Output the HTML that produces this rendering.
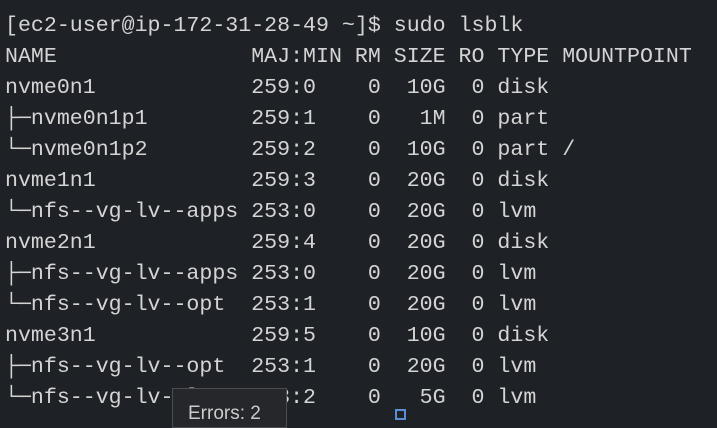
<!DOCTYPE html>
<html><head><style>
html,body{margin:0;padding:0;width:717px;height:415px;overflow:hidden;background:#1e2126;}
pre{margin:0;position:absolute;left:5px;top:11px;font-family:"Liberation Mono","DejaVu Sans Mono",monospace;font-size:21.6px;line-height:31px;color:#d4d4d4;letter-spacing:0;}
.tip{position:absolute;left:172px;top:388px;width:115px;height:40px;background:#25272b;border:1px solid #4a4d52;box-sizing:border-box;}
.tip span{position:absolute;left:15px;top:14px;font-family:"Liberation Sans",sans-serif;font-size:19px;color:#cccccc;}
.sq{position:absolute;left:395px;top:409px;width:11px;height:11px;border:2px solid #5a8fd6;box-sizing:border-box;}
</style></head><body>
<pre>[ec2-user@ip-172-31-28-49 ~]$ sudo lsblk
NAME               MAJ:MIN RM SIZE RO TYPE MOUNTPOINT
nvme0n1            259:0    0  10G  0 disk
├─nvme0n1p1        259:1    0   1M  0 part
└─nvme0n1p2        259:2    0  10G  0 part /
nvme1n1            259:3    0  20G  0 disk
└─nfs--vg-lv--apps 253:0    0  20G  0 lvm
nvme2n1            259:4    0  20G  0 disk
├─nfs--vg-lv--apps 253:0    0  20G  0 lvm
└─nfs--vg-lv--opt  253:1    0  20G  0 lvm
nvme3n1            259:5    0  10G  0 disk
├─nfs--vg-lv--opt  253:1    0  20G  0 lvm
└─nfs--vg-lv--logs 253:2    0   5G  0 lvm</pre>
<div class="tip"><span>Errors: 2</span></div>
<div class="sq"></div>
</body></html>
